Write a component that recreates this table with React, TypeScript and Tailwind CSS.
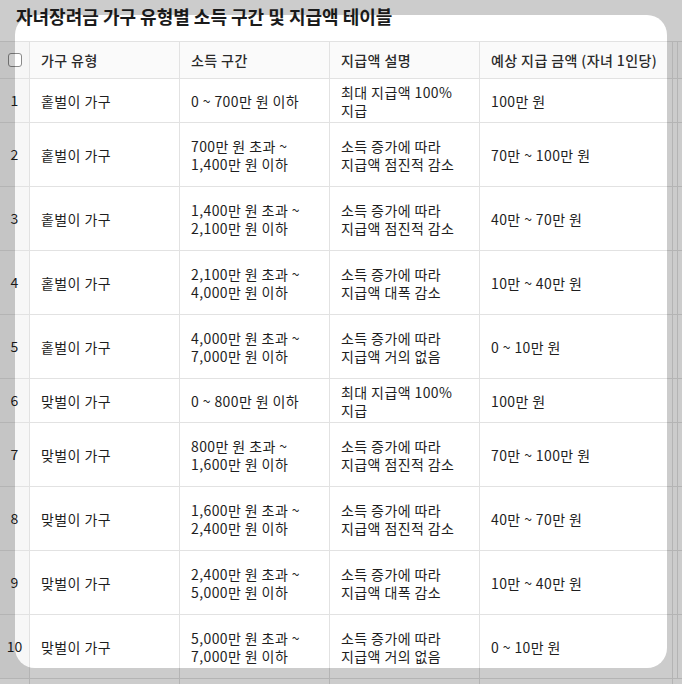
const rows: { no: number; type: string; income: string[]; desc: string[]; amount: string; h: string }[] = [
  { no: 1, type: "홑벌이 가구", income: ["0 ~ 700만 원 이하"], desc: ["최대 지급액 100%", "지급"], amount: "100만 원", h: "h-[44px]" },
  { no: 2, type: "홑벌이 가구", income: ["700만 원 초과 ~", "1,400만 원 이하"], desc: ["소득 증가에 따라", "지급액 점진적 감소"], amount: "70만 ~ 100만 원", h: "h-[64px]" },
  { no: 3, type: "홑벌이 가구", income: ["1,400만 원 초과 ~", "2,100만 원 이하"], desc: ["소득 증가에 따라", "지급액 점진적 감소"], amount: "40만 ~ 70만 원", h: "h-[64px]" },
  { no: 4, type: "홑벌이 가구", income: ["2,100만 원 초과 ~", "4,000만 원 이하"], desc: ["소득 증가에 따라", "지급액 대폭 감소"], amount: "10만 ~ 40만 원", h: "h-[64px]" },
  { no: 5, type: "홑벌이 가구", income: ["4,000만 원 초과 ~", "7,000만 원 이하"], desc: ["소득 증가에 따라", "지급액 거의 없음"], amount: "0 ~ 10만 원", h: "h-[64px]" },
  { no: 6, type: "맞벌이 가구", income: ["0 ~ 800만 원 이하"], desc: ["최대 지급액 100%", "지급"], amount: "100만 원", h: "h-[44px]" },
  { no: 7, type: "맞벌이 가구", income: ["800만 원 초과 ~", "1,600만 원 이하"], desc: ["소득 증가에 따라", "지급액 점진적 감소"], amount: "70만 ~ 100만 원", h: "h-[64px]" },
  { no: 8, type: "맞벌이 가구", income: ["1,600만 원 초과 ~", "2,400만 원 이하"], desc: ["소득 증가에 따라", "지급액 점진적 감소"], amount: "40만 ~ 70만 원", h: "h-[64px]" },
  { no: 9, type: "맞벌이 가구", income: ["2,400만 원 초과 ~", "5,000만 원 이하"], desc: ["소득 증가에 따라", "지급액 대폭 감소"], amount: "10만 ~ 40만 원", h: "h-[64px]" },
  { no: 10, type: "맞벌이 가구", income: ["5,000만 원 초과 ~", "7,000만 원 이하"], desc: ["소득 증가에 따라", "지급액 거의 없음"], amount: "0 ~ 10만 원", h: "h-[64px]" },
];

const cell = "h-full flex flex-col justify-center border-r border-[#e2e2e2] px-[11px] leading-[18px] whitespace-nowrap";

const App = () => {
  return (
    <div
      className="relative w-[682px] h-[684px] overflow-hidden bg-white text-[14px] tracking-[0.4px] text-[#1e1e1e]"
      style={{ fontFamily: '"Noto Sans CJK KR", "Noto Sans", sans-serif' }}
    >
      <div className="relative z-10 h-[41px] pl-[16px] pt-[4px] text-[18px] tracking-normal font-semibold text-[#1a1a1a] leading-[24px]">
        자녀장려금 가구 유형별 소득 구간 및 지급액 테이블
      </div>

      <div className="border-t border-[#e2e2e2]">
        {/* header */}
        <div className="flex h-[37px] border-b border-[#e2e2e2] bg-[#fafafa] font-medium text-[#2a2a2a]">
          <div className="w-[30px] shrink-0 h-full flex items-center justify-center border-r border-[#e2e2e2] bg-[#f6f6f6]">
            <div className="w-[14px] h-[14px] rounded-[3px] border border-[#8a8a8a] bg-white" />
          </div>
          <div className={`w-[150px] shrink-0 ${cell}`}>가구 유형</div>
          <div className={`w-[150px] shrink-0 ${cell}`}>소득 구간</div>
          <div className={`w-[150px] shrink-0 ${cell}`}>지급액 설명</div>
          <div className={`w-[193px] shrink-0 ${cell}`}>예상 지급 금액 (자녀 1인당)</div>
          <div className="w-[5px] shrink-0 h-full border-r border-[#e2e2e2]" />
        </div>

        {rows.map((r) => (
          <div key={r.no} className={`flex ${r.h} border-b border-[#e2e2e2]`}>
            <div className="w-[30px] shrink-0 h-full flex items-center justify-center border-r border-[#e2e2e2] bg-[#f7f7f7] tracking-normal">
              {r.no}
            </div>
            <div className={`w-[150px] shrink-0 ${cell}`}>{r.type}</div>
            <div className={`w-[150px] shrink-0 ${cell}`}>
              {r.income.map((l) => (
                <span key={l}>{l}</span>
              ))}
            </div>
            <div className={`w-[150px] shrink-0 ${cell}`}>
              {r.desc.map((l) => (
                <span key={l}>{l}</span>
              ))}
            </div>
            <div className={`w-[193px] shrink-0 ${cell}`}>{r.amount}</div>
            <div className="w-[5px] shrink-0 h-full border-r border-[#e2e2e2]" />
          </div>
        ))}
        <div className="flex h-[40px]">
          <div className="w-[30px] shrink-0 h-full border-r border-[#e2e2e2]" />
          <div className="w-[150px] shrink-0 h-full border-r border-[#e2e2e2]" />
          <div className="w-[150px] shrink-0 h-full border-r border-[#e2e2e2]" />
          <div className="w-[150px] shrink-0 h-full border-r border-[#e2e2e2]" />
          <div className="w-[193px] shrink-0 h-full border-r border-[#e2e2e2]" />
        </div>
      </div>

      {/* spotlight overlay */}
      <div className="pointer-events-none absolute left-[15px] top-[15px] w-[652px] h-[653px] rounded-[20px] shadow-[0_0_0_2000px_rgba(0,0,0,0.2)]" />
    </div>
  );
};

export default App;
